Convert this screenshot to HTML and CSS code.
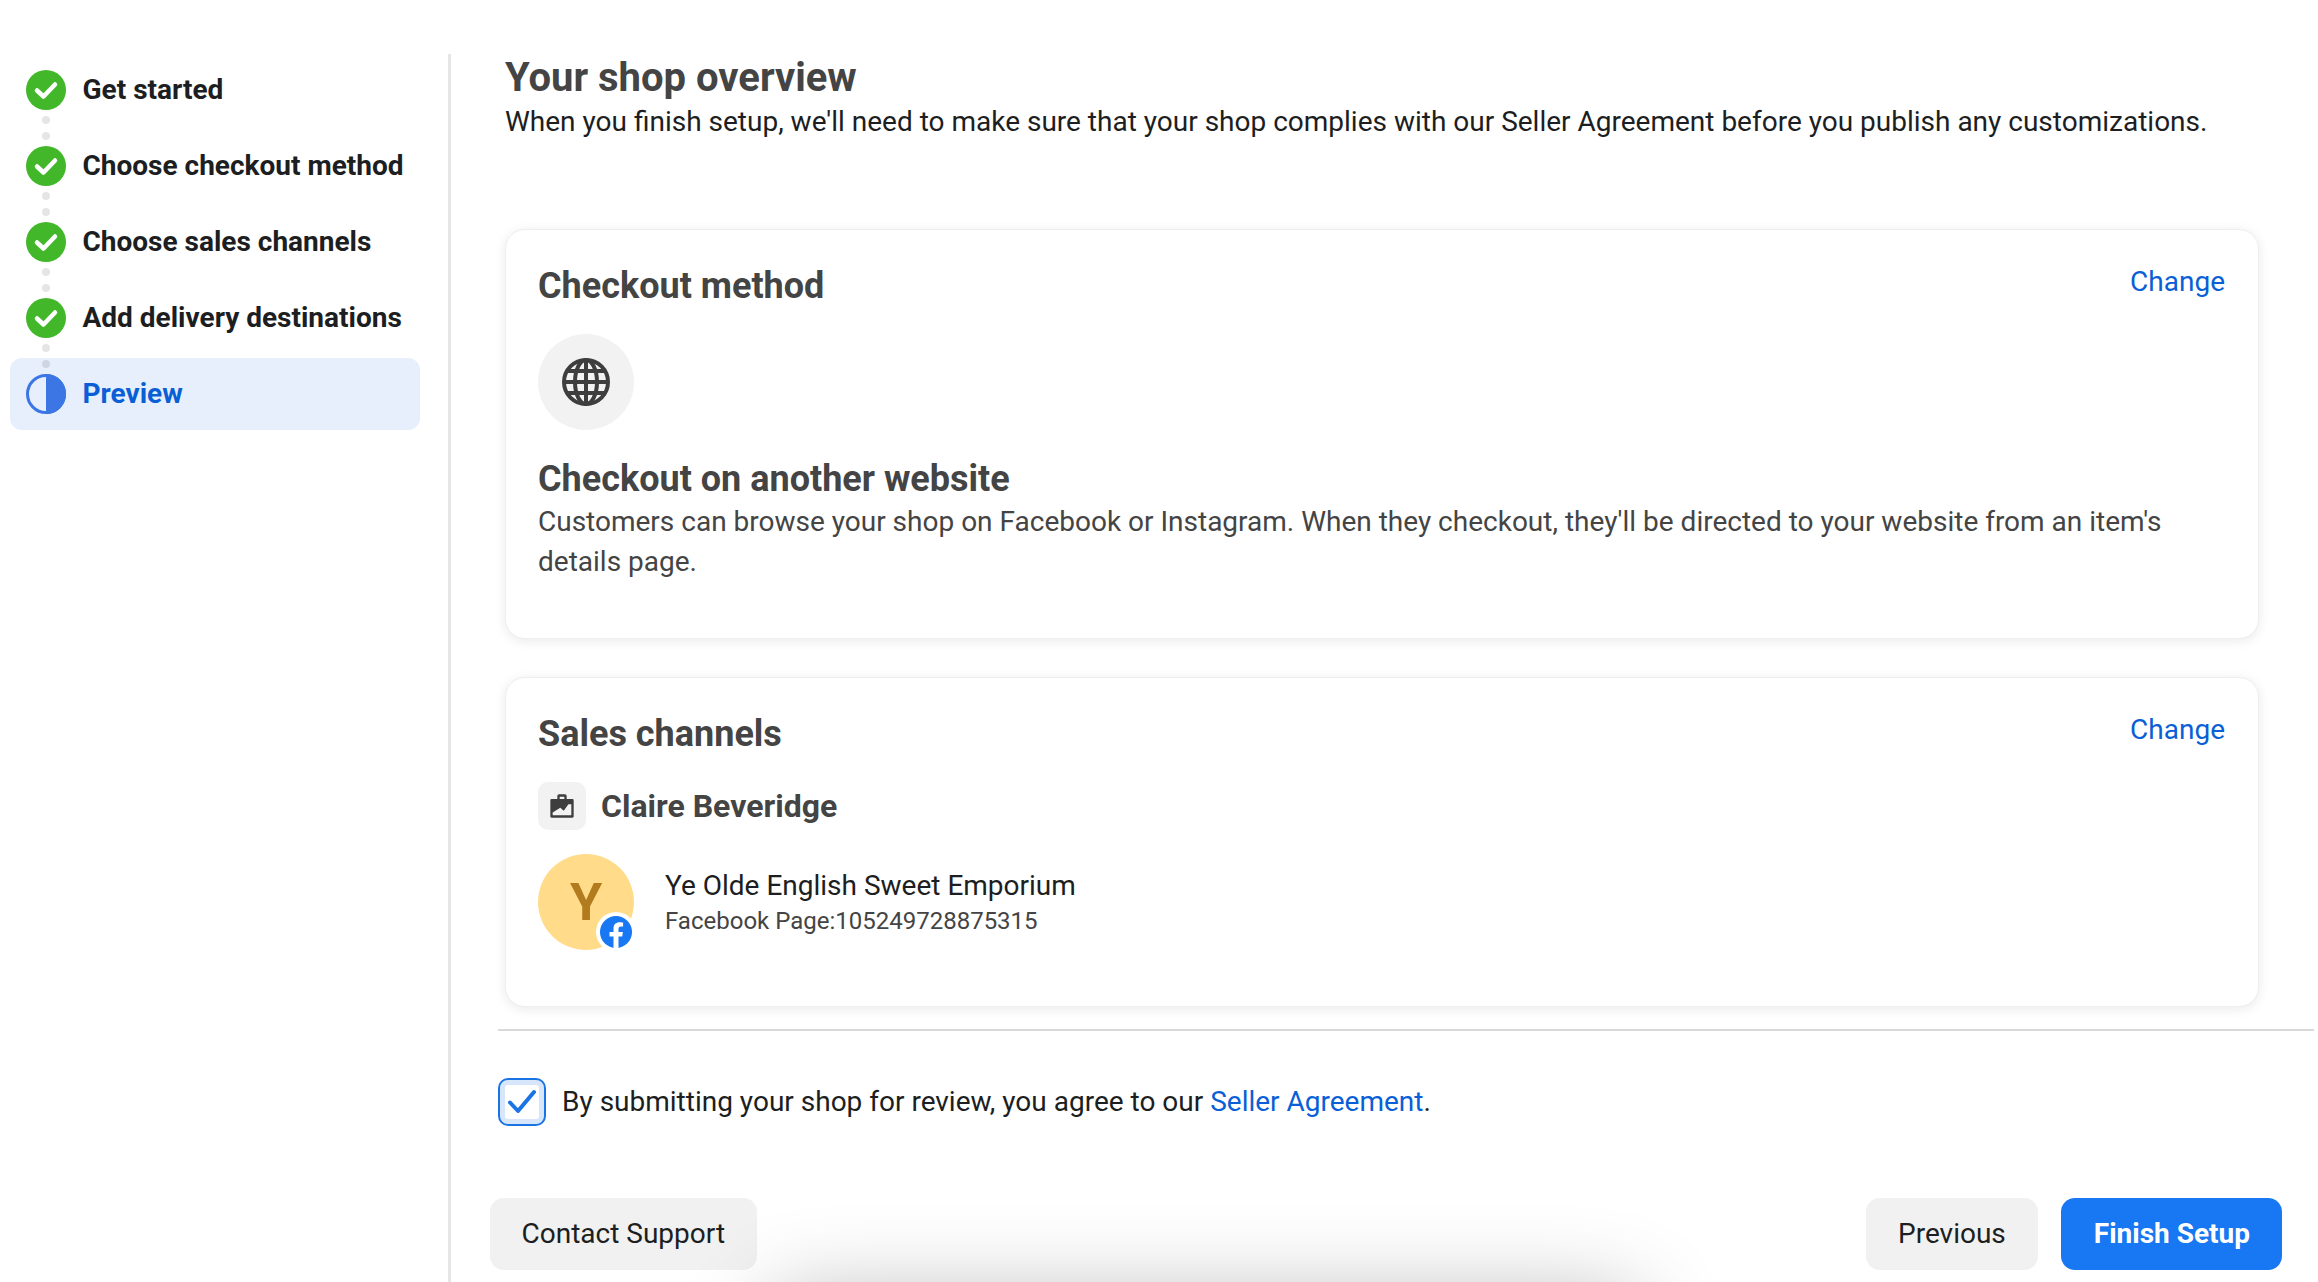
FILE: index.html
```html
<!DOCTYPE html>
<html lang="en">
<head>
<meta charset="utf-8">
<title>Your shop overview</title>
<link rel="stylesheet" href="styles.css">
</head>
<body>
<div class="shell">
  <aside class="sidebar">
    <ul class="steps">
      <li class="step"><svg class="step-icon" viewBox="0 0 40 40"><circle cx="20" cy="20" r="20" fill="#42b72a"/><path d="M11 20.5l6.5 6L29 14.500" fill="none" stroke="#fff" stroke-width="4.500" stroke-linecap="round" stroke-linejoin="round"/></svg><span>Get started</span></li>
      <li class="step"><svg class="step-icon" viewBox="0 0 40 40"><circle cx="20" cy="20" r="20" fill="#42b72a"/><path d="M11 20.5l6.5 6L29 14.500" fill="none" stroke="#fff" stroke-width="4.500" stroke-linecap="round" stroke-linejoin="round"/></svg><span>Choose checkout method</span></li>
      <li class="step"><svg class="step-icon" viewBox="0 0 40 40"><circle cx="20" cy="20" r="20" fill="#42b72a"/><path d="M11 20.5l6.5 6L29 14.500" fill="none" stroke="#fff" stroke-width="4.500" stroke-linecap="round" stroke-linejoin="round"/></svg><span>Choose sales channels</span></li>
      <li class="step"><svg class="step-icon" viewBox="0 0 40 40"><circle cx="20" cy="20" r="20" fill="#42b72a"/><path d="M11 20.5l6.5 6L29 14.500" fill="none" stroke="#fff" stroke-width="4.500" stroke-linecap="round" stroke-linejoin="round"/></svg><span>Add delivery destinations</span></li>
      <li class="step step-active"><svg class="step-icon" viewBox="0 0 40 40"><circle cx="20" cy="20" r="18.500" fill="none" stroke="#3b76e4" stroke-width="3"/><path d="M20 0a20 20 0 0 1 0 40z" fill="#3b76e4"/></svg><span>Preview</span></li>
    </ul>
  </aside>
  <main class="main">
    <header class="intro">
      <h1 class="page-title">Your shop overview</h1>
      <p class="page-sub">When you finish setup, we'll need to make sure that your shop complies with our Seller Agreement before you publish any customizations.</p>
    </header>

    <section class="card card-checkout">
      <div class="card-head">
        <h2 class="card-title">Checkout method</h2>
        <a class="link change" href="#">Change</a>
      </div>
      <div class="globe-tile">
        <svg class="globe" viewBox="0 0 48 48" fill="none" stroke="#3e3e3e" stroke-width="4">
          <circle cx="24" cy="24" r="22"/>
          <ellipse cx="24" cy="24" rx="11" ry="22"/>
          <path d="M24 2v44M2 24h44M5 13h38M5 35h38"/>
        </svg>
      </div>
      <h2 class="card-title option-title">Checkout on another website</h2>
      <p class="option-text">Customers can browse your shop on Facebook or Instagram. When they checkout, they'll be directed to your website from an item's details page.</p>
    </section>

    <section class="card card-sales">
      <div class="card-head">
        <h2 class="card-title">Sales channels</h2>
        <a class="link change" href="#">Change</a>
      </div>
      <div class="account">
        <div class="bag-tile">
          <svg class="bag" viewBox="0 0 24 24"><path fill="#3e3e3e" fill-rule="evenodd" d="M8 3.500A1.500 1.500 0 0 1 9.500 2h5A1.500 1.500 0 0 1 16 3.500V6h5a1 1 0 0 1 1 1v14a1 1 0 0 1-1 1H3a1 1 0 0 1-1-1V7a1 1 0 0 1 1-1h5zM10 4v2h4V4zM4 17.500V20h16V10.500h-2.500l-4 5.500-3-2.500z"/></svg>
        </div>
        <span class="account-name">Claire Beveridge</span>
      </div>
      <div class="page-row">
        <div class="avatar">
          <span class="avatar-letter">Y</span>
          <span class="badge">
            <svg class="fb" viewBox="0 0 32 32"><circle cx="16" cy="16" r="16" fill="#1877f2"/><path fill="#fff" d="M22.200 20.600l.7-4.600h-4.400v-3c0-1.300.6-2.500 2.600-2.500h2V6.600s-1.800-.3-3.600-.3c-3.600 0-6 2.200-6 6.200V16h-4v4.600h4V32a16 16 0 0 0 5 0V20.600z"/></svg>
          </span>
        </div>
        <div class="page-info">
          <div class="page-name">Ye Olde English Sweet Emporium</div>
          <div class="page-id">Facebook Page:105249728875315</div>
        </div>
      </div>
    </section>

    <hr class="rule">

    <div class="agree">
      <span class="checkbox">
        <svg class="tick" viewBox="0 0 30 30"><path d="M3 15.500l8 8.500L27 5" fill="none" stroke="#1b74e4" stroke-width="4" stroke-linecap="round" stroke-linejoin="round"/></svg>
      </span>
      <span class="agree-text">By submitting your shop for review, you agree to our <a class="link" href="#">Seller Agreement</a>.</span>
    </div>

    <footer class="actions">
      <button class="btn btn-contact">Contact Support</button>
      <div class="actions-right">
        <button class="btn">Previous</button>
        <button class="btn btn-primary">Finish Setup</button>
      </div>
    </footer>
  </main>
  <div class="bottom-shade"></div>
</div>
</body>
</html>
```

FILE: styles.css
```css
* { box-sizing: border-box; }
html, body { margin: 0; padding: 0; background: #fff; }
body {
  font-family: Roboto, "Liberation Sans", sans-serif;
  color: #1c1e21;
  overflow: hidden;
}
.shell {
  position: relative;
  display: grid;
  grid-template-columns: 451px 1fr;
  width: 2318px;
  height: 1282px;
  overflow: hidden;
}

/* Sidebar */
.sidebar {
  margin-top: 54px;
  padding-left: 10px;
  border-right: 3px solid #e6e6e6;
}
.steps {
  list-style: none;
  margin: 0;
  padding: 0;
  width: 410px;
  display: flex;
  flex-direction: column;
  gap: 4px;
}
.step {
  position: relative;
  display: flex;
  align-items: center;
  gap: 16.5px;
  height: 72px;
  padding-left: 16px;
  border-radius: 12px;
  font-size: 28px;
  font-weight: 700;
  color: #1c1e21;
}
.step span { padding-bottom: 2px; }
.step:not(.step-active)::after {
  content: "";
  position: absolute;
  left: 32px;
  top: 62px;
  width: 8px;
  height: 8px;
  border-radius: 50%;
  background: rgba(0, 0, 0, .1);
  box-shadow: 0 16px 0 rgba(0, 0, 0, .1);
  z-index: 2;
}
.step-icon { width: 40px; height: 40px; flex: none; }
.step-active { background: #e7effc; color: #0a5fd6; }

/* Main */
.main { min-width: 0; }
.intro { padding: 56px 0 0 54px; }
.page-title {
  margin: 0;
  font-size: 40px;
  line-height: 44px;
  font-weight: 700;
  color: #444;
}
.page-sub {
  margin: 0;
  font-size: 28px;
  line-height: 44px;
  color: #1c1e21;
}

.card {
  width: 1754px;
  margin-left: 54px;
  padding: 36px 33px 56px 32px;
  background: #fff;
  border: 1px solid #efefef;
  border-radius: 20px;
  box-shadow: 0 2px 12px rgba(0, 0, 0, .09);
}
.card-checkout { margin-top: 85px; height: 410px; }
.card-sales { margin-top: 38px; height: 330px; }
.card-head {
  display: flex;
  justify-content: space-between;
  align-items: flex-start;
}
.card-title {
  margin: 0;
  font-size: 36px;
  line-height: 40px;
  font-weight: 700;
  color: #444;
}
.link { color: #0a5fd6; text-decoration: none; }
.change { font-size: 28px; line-height: 32px; }

.globe-tile {
  width: 96px;
  height: 96px;
  margin-top: 28px;
  border-radius: 50%;
  background: #f2f2f2;
  display: flex;
  align-items: center;
  justify-content: center;
}
.globe { width: 48px; height: 48px; }
.option-title { margin-top: 29px; }
.option-text {
  margin: 3px 0 0;
  font-size: 28px;
  line-height: 40px;
  color: #444;
}

.account {
  display: flex;
  align-items: center;
  gap: 15px;
  margin-top: 28px;
}
.bag-tile {
  width: 48px;
  height: 48px;
  border-radius: 10px;
  background: #f2f2f2;
  display: flex;
  align-items: center;
  justify-content: center;
}
.bag { width: 28px; height: 28px; }
.account-name { font-size: 32px; font-weight: 700; color: #444; }

.page-row {
  display: flex;
  align-items: center;
  gap: 31px;
  margin-top: 24px;
}
.avatar {
  position: relative;
  width: 96px;
  height: 96px;
  flex: none;
  border-radius: 50%;
  background: #ffdb8a;
  display: flex;
  align-items: center;
  justify-content: center;
}
.avatar-letter {
  font-size: 52px;
  font-weight: 700;
  color: #b27b1e;
}
.badge {
  position: absolute;
  right: -2px;
  bottom: -2px;
  width: 40px;
  height: 40px;
  border-radius: 50%;
  background: #fff;
  display: flex;
  align-items: center;
  justify-content: center;
}
.fb { width: 32px; height: 32px; }
.page-info { padding-top: 1px; }
.page-name { font-size: 28px; line-height: 36px; color: #1c1e21; }
.page-id { font-size: 24px; line-height: 34px; color: #444; }

.rule {
  margin: 22px 4px 0 47px;
  border: 0;
  height: 2px;
  background: #d9d9d9;
}

.agree {
  display: flex;
  align-items: center;
  gap: 16px;
  margin: 47px 0 0 47px;
}
.checkbox {
  width: 48px;
  height: 48px;
  flex: none;
  border: 2px solid #1b74e4;
  border-radius: 10px;
  background: #fff;
  box-shadow: inset 0 0 0 5px #d8e6fb;
  display: flex;
  align-items: center;
  justify-content: center;
}
.tick { width: 30px; height: 30px; }
.agree-text { font-size: 28px; color: #1c1e21; padding-bottom: 2px; }

.actions {
  display: flex;
  justify-content: space-between;
  margin: 72px 36px 0 39px;
}
.actions-right { display: flex; gap: 23px; }
.btn {
  height: 72px;
  padding: 0 32px 2px;
  border: 0;
  border-radius: 14px;
  background: #f1f1f1;
  font-family: inherit;
  font-size: 28px;
  color: #1c1e21;
}
.btn-contact { padding: 0 31.5px 2px; }
.btn-primary { background: #1877f2; color: #fff; font-weight: 700; padding: 0 32px 2px 33px; }

.bottom-shade {
  position: absolute;
  left: 775px;
  top: 1300px;
  width: 860px;
  height: 100px;
  box-shadow: 0 0 90px rgba(0, 0, 0, .3);
  pointer-events: none;
}
```
